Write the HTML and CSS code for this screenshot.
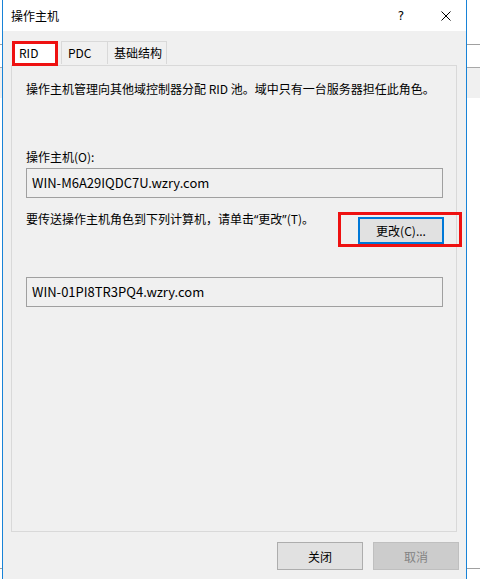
FILE: index.html
```html
<!DOCTYPE html>
<html lang="zh-CN">
<head>
<meta charset="utf-8">
<title>操作主机</title>
<link rel="stylesheet" href="styles.css">
</head>
<body>
<div class="desk">
  <div class="window">
    <div class="titlebar">
      <span class="title">操作主机</span>
      <div class="title-buttons">
        <span class="help">?</span>
        <svg class="close" width="10" height="10" viewBox="0 0 10 10"><path d="M0.5 0.5 L9.5 9.5 M9.5 0.5 L0.5 9.5" stroke="#000" stroke-width="1" fill="none"/></svg>
      </div>
    </div>
    <div class="client">
      <div class="tabs">
        <div class="tab tab-active"><span class="mark">RID</span></div>
        <div class="tab">PDC</div>
        <div class="tab">基础结构</div>
      </div>
      <div class="panel">
        <p class="desc">操作主机管理向其他域控制器分配 RID 池。域中只有一台服务器担任此角色。</p>
        <p class="label">操作主机(O):</p>
        <div class="field">WIN-M6A29IQDC7U.wzry.com</div>
        <div class="change-row">
          <p class="hint">要传送操作主机角色到下列计算机，请单击<span class="q">“</span>更改<span class="q">”</span>(T)。</p>
          <div class="mark-box"><button class="btn btn-focus">更改(C)...</button></div>
        </div>
        <div class="field field-2">WIN-01PI8TR3PQ4.wzry.com</div>
      </div>
      <div class="footer">
        <button class="btn">关闭</button>
        <button class="btn btn-disabled">取消</button>
      </div>
    </div>
  </div>
</div>
</body>
</html>
```
FILE: styles.css
```css
* { box-sizing: border-box; }
html, body { margin: 0; padding: 0; }
body {
  width: 480px;
  height: 579px;
  overflow: hidden;
  background:
    linear-gradient(#a0a0a0, #a0a0a0) 0 44px / 100% 1px no-repeat,
    linear-gradient(#a8a8a8, #a8a8a8) 0 67px / 100% 1px no-repeat,
    linear-gradient(#f0f0f0, #f0f0f0) 0 68px / 100% 30px no-repeat,
    linear-gradient(#a0a0a0, #a0a0a0) 0 568px / 100% 1px no-repeat,
    #ffffff;
  font-family: "Noto Sans CJK SC", "Noto Sans", sans-serif;
  font-size: 12px;
  color: #000;
}
.desk {
  padding-left: 2px;
  height: 579px;
}
.window {
  width: 465px;
  height: 579px;
  border-left: 1px solid #1883d7;
  border-right: 1px solid #1883d7;
  background: #f0f0f0;
  display: flex;
  flex-direction: column;
}
.titlebar {
  height: 31px;
  background: #ffffff;
  display: flex;
  align-items: center;
  justify-content: space-between;
  padding-left: 8px;
  padding-right: 15px;
}
.title { font-size: 12px; line-height: 16px; }
.title-buttons {
  display: flex;
  align-items: center;
  gap: 37px;
}
.help {
  font-family: "DejaVu Sans", sans-serif;
  font-size: 12px;
  line-height: 14px;
}
.close { display: block; }
.client {
  flex: 1;
  display: flex;
  flex-direction: column;
  padding: 9px 9px 0 8px;
}
.tabs {
  display: flex;
  align-items: flex-end;
  height: 25px;
  padding-left: 1px;
  position: relative;
  z-index: 1;
}
.tab {
  height: 23px;
  margin-bottom: 1px;
  border: 1px solid #d9d9d9;
  border-bottom: none;
  background: #f0f0f0;
  padding: 0 7px 0 6px;
  display: flex;
  align-items: center;
  line-height: 16px;
  white-space: nowrap;
}
.tab + .tab { border-left: none; }
.tab:nth-child(2) {
  width: 47px;
  margin-left: 3px;
  padding-left: 6px;
  border-left: 1px solid #d9d9d9;
}
.tab:nth-child(3) { width: 59px; }
.tab-active {
  height: 25px;
  width: 46px;
  margin-bottom: -1px;
  padding: 0;
  border: none;
  background: #ffffff;
}
.mark {
  display: flex;
  align-items: center;
  width: 100%;
  height: 100%;
  border: 3px solid #ee1111;
  padding-left: 4px;
  padding-bottom: 2px;
}
.panel {
  width: 446px;
  height: 467px;
  border: 1px solid #d9d9d9;
  background: #f0f0f0;
  padding: 15px 0 0 14px;
}
.desc, .label, .hint {
  margin: 0;
  line-height: 16px;
  white-space: nowrap;
}
.label { margin-top: 52px; }
.field {
  margin-top: 3px;
  width: 417px;
  height: 30px;
  border: 1px solid #a0a0a0;
  background: #f0f0f0;
  font-family: "Noto Sans CJK SC", sans-serif;
  font-size: 13px;
  line-height: 27px;
  padding-left: 5px;
}
.change-row {
  margin-top: 13px;
  width: 417px;
  display: flex;
  justify-content: space-between;
  align-items: flex-start;
}
.q { font-family: "Noto Sans", sans-serif; }
.hint { margin-top: 0; }
.mark-box {
  margin-right: -19px;
  margin-top: 1px;
  border: 3px solid #ee1111;
  padding: 2px 15px 0 17px;
  height: 35px;
}
.btn {
  font-family: "Noto Sans CJK SC", sans-serif;
  font-size: 12px;
  width: 86px;
  height: 28px;
  border: 1px solid #adadad;
  background: #e1e1e1;
  color: #000;
  padding: 0;
  display: flex;
  align-items: center;
  justify-content: center;
}
.btn-focus {
  width: 86px;
  height: 27px;
  border: 2px solid #0078d7;
}
.field-2 { margin-top: 30px; }
.footer {
  display: flex;
  justify-content: flex-end;
  gap: 10px;
  margin-top: 10px;
  padding-right: 0;
  margin-right: -2px;
}
.btn-disabled {
  background: #cccccc;
  border-color: #bfbfbf;
  color: #838383;
}
```
